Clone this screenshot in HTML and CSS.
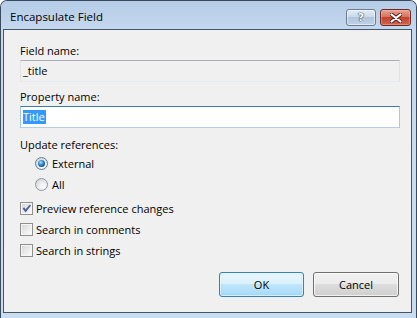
FILE: index.html
```html
<!DOCTYPE html>
<html>
<head>
<meta charset="utf-8">
<link rel="stylesheet" href="styles.css">
</head>
<body>
<div class="window">
  <div class="titlebar">
    <span class="title">Encapsulate Field</span>
    <div class="caption-buttons">
      <div class="cbtn help"><span class="qmark">?</span></div>
      <div class="cbtn close">
        <svg width="12" height="10" viewBox="0 0 12 10">
          <path d="M1.5 1.5 L10.5 8.5 M10.5 1.5 L1.5 8.5" stroke="#5a1a14" stroke-width="4" stroke-linecap="round" fill="none"/>
          <path d="M1.5 1.5 L10.5 8.5 M10.5 1.5 L1.5 8.5" stroke="#ffffff" stroke-width="2.2" stroke-linecap="round" fill="none"/>
        </svg>
      </div>
    </div>
  </div>
  <div class="client">
    <div class="label">Field name:</div>
    <div class="textbox readonly">_title</div>
    <div class="label gap">Property name:</div>
    <div class="textbox focused"><span class="sel">Title</span></div>
    <div class="label gap2">Update references:</div>
    <div class="radios">
      <div class="row"><span class="radio checked"></span><span class="opt">External</span></div>
      <div class="row"><span class="radio"></span><span class="opt">All</span></div>
    </div>
    <div class="checks">
      <div class="row"><span class="check on"><svg width="11" height="11" viewBox="0 0 11 11"><path d="M1.6 5.6 L3.2 4.2 L4.6 6.2 L8.8 1.4 L10 2.6 L4.6 9.4 Z" fill="#4f5f9a"/></svg></span><span class="opt">Preview reference changes</span></div>
      <div class="row"><span class="check"></span><span class="opt">Search in comments</span></div>
      <div class="row"><span class="check"></span><span class="opt">Search in strings</span></div>
    </div>
    <div class="buttons">
      <div class="btn default">OK</div>
      <div class="btn">Cancel</div>
    </div>
  </div>
</div>
</body>
</html>
```

FILE: styles.css
```css
* { box-sizing: border-box; }
html, body {
  margin: 0;
  padding: 0;
  background: #ffffff;
}
body {
  font-family: "Open Sans", "Noto Sans", sans-serif;
  font-size: 11px;
  color: #000;
}
.window {
  width: 417px;
  height: 318px;
  border: 1px solid #3b4a5c;
  border-bottom: none;
  border-radius: 7px 7px 0 0;
  background: linear-gradient(#b8cfe8 0px, #c6d9ee 28px, #c9dcf0 100%);
  display: flex;
  flex-direction: column;
  overflow: hidden;
}
.titlebar {
  height: 28px;
  flex: none;
  display: flex;
  align-items: flex-start;
  justify-content: space-between;
  padding-left: 9px;
  background: linear-gradient(#b5cce6, #c4d8ee);
}
.title {
  font-size: 11.5px;
  line-height: 16px;
  margin-top: 8px;
  color: #000;
}
.caption-buttons {
  display: flex;
  gap: 4px;
  margin-top: 8px;
  margin-right: 5px;
}
.cbtn {
  height: 17px;
  border-radius: 3px;
  display: flex;
  align-items: center;
  justify-content: center;
}
.help {
  width: 30px;
  border: 1px solid #6b7d93;
  background: linear-gradient(#e3ecf6 0%, #cbd9ea 45%, #b0c4dc 50%, #bfd2e8 100%);
  box-shadow: inset 0 0 0 1px rgba(255,255,255,0.5);
}
.qmark {
  font-family: "DejaVu Sans", sans-serif;
  font-weight: bold;
  font-size: 11px;
  line-height: 11px;
  color: #ffffff;
  text-shadow: 0 0 1px #33404f, 0 0 1px #33404f, 0 0 1px #33404f;
}
.close {
  width: 31px;
  border: 1px solid #6e2a22;
  background: linear-gradient(#e8a293 0%, #d6735d 45%, #c0442e 50%, #cf6550 100%);
  box-shadow: inset 0 0 0 1px rgba(255,210,200,0.35);
}
.client {
  flex: 1;
  margin: 0 4px 5px 2px;
  border: 1px solid #44556a;
  background: #f0f0f0;
  padding: 12px 11px 0 16px;
  display: flex;
  flex-direction: column;
}
.label {
  line-height: 17px;
  height: 17px;
}
.label.gap { margin-top: 6px; }
.label.gap2 { margin-top: 8px; }
.textbox {
  margin-top: 1px;
  height: 22px;
  border: 1px solid;
  padding: 0 2px;
  line-height: 20px;
}
.textbox.readonly {
  background: #f0f0f0;
  border-color: #abadb3 #e2e3ea #e3e9ef #e2e3ea;
}
.textbox.focused {
  background: #ffffff;
  border-color: #3d7bad #a4c9e3 #b5cfe7 #a4c9e3;
  display: flex;
  align-items: center;
}
.sel {
  background: #3399ff;
  color: #ffffff;
  line-height: 14px;
  height: 14px;
  padding-right: 1px;
}
.radios {
  padding-left: 15px;
}
.row {
  height: 21px;
  display: flex;
  align-items: center;
}
.opt { margin-left: 4px; }
.radio {
  width: 13px;
  height: 13px;
  border-radius: 50%;
  border: 1px solid #8d9aa7;
  background: radial-gradient(circle at 65% 70%, #ffffff 0%, #ebebeb 45%, #c8c8c8 100%);
  display: flex;
  align-items: center;
  justify-content: center;
  flex: none;
}
.radio.checked {
  border-color: #5d7d99;
}
.radio.checked::after {
  content: "";
  width: 7px;
  height: 7px;
  border-radius: 50%;
  background: radial-gradient(circle at 40% 35%, #b9e6ff 0%, #3c97d8 35%, #0e4f8f 75%, #0a3563 100%);
}
.checks {
  margin-top: 3px;
}
.check {
  width: 13px;
  height: 13px;
  border: 1px solid #8f8f8f;
  background: linear-gradient(135deg, #d4d4d4 0%, #eeeeee 60%, #fbfbfb 100%);
  box-shadow: inset 0 0 0 1px #f6f6f6;
  display: flex;
  align-items: center;
  justify-content: center;
  flex: none;
}
.checks .opt { margin-left: 3px; }
.buttons {
  margin-top: 11px;
  margin-right: 1px;
  display: flex;
  justify-content: flex-end;
  gap: 9px;
}
.btn {
  width: 86px;
  height: 25px;
  border: 1px solid #707070;
  border-radius: 3px;
  background: linear-gradient(#f2f2f2 0%, #ebebeb 50%, #dddddd 50%, #cfcfcf 100%);
  box-shadow: inset 0 0 0 1px rgba(255,255,255,0.7);
  display: flex;
  align-items: center;
  justify-content: center;
  font-size: 11px;
}
.btn.default {
  width: 85px;
  border-color: #3c7fb1;
  background: linear-gradient(#eaf6fd 0%, #d9f0fc 50%, #bee6fd 50%, #a7d9f5 100%);
  box-shadow: inset 0 0 0 1px rgba(255,255,255,0.6), inset 0 0 2px #48d0f8;
}
```
